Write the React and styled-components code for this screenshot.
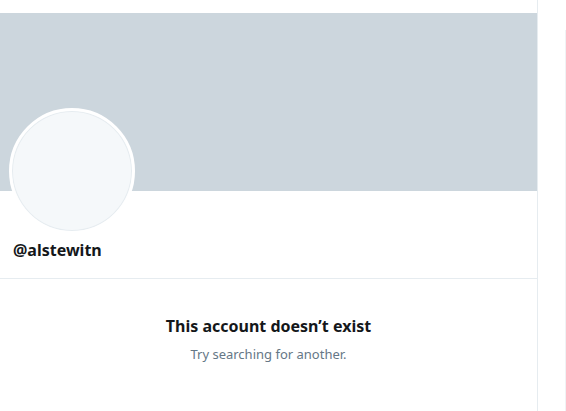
import React from "react"
import styled, { createGlobalStyle } from "styled-components"

const GlobalStyle = createGlobalStyle`
  body {
    margin: 0;
    background: #ffffff;
    font-family: "Noto Sans", "Open Sans", sans-serif;
  }
`

const Page = styled.div`
  display: flex;
  height: 411px;
  overflow: hidden;
`

const Main = styled.main`
  width: 537px;
  flex-shrink: 0;
  border-right: 1px solid #e6ecf0;
`

const Header = styled.div`
  height: 13px;
`

const Banner = styled.div`
  height: 178px;
  background: #ccd6dd;
`

const ProfileInfo = styled.div`
  display: flex;
  flex-direction: column;
  padding: 0 13px;
  border-bottom: 1px solid #e6ecf0;
  height: 87px;
`

const Avatar = styled.div`
  width: 120px;
  height: 120px;
  margin-top: -83px;
  margin-left: -4px;
  border-radius: 50%;
  border: 3px solid #ffffff;
  background: #f5f8fa;
  box-shadow: 0 0 0 1px #e6ecf0 inset;
`

const Handle = styled.div`
  margin-top: 6px;
  font-size: 16px;
  font-weight: 700;
  color: #14171a;
  line-height: 20px;
`

const EmptyState = styled.div`
  display: flex;
  flex-direction: column;
  align-items: center;
  padding-top: 36px;
`

const EmptyTitle = styled.div`
  font-size: 16px;
  font-weight: 700;
  color: #14171a;
  line-height: 22px;
`

const EmptyText = styled.div`
  margin-top: 8px;
  font-size: 13px;
  color: #657786;
  line-height: 18px;
`

const Sidebar = styled.aside`
  flex: 1;
  padding-top: 30px;
  padding-left: 27px;
`

const SidebarCard = styled.div`
  height: 100%;
  border-left: 1px solid #f0f3f5;
`

export default function App() {
  return (
    <>
      <GlobalStyle />
      <Page>
        <Main>
          <Header />
          <Banner />
          <ProfileInfo>
            <Avatar />
            <Handle>@alstewitn</Handle>
          </ProfileInfo>
          <EmptyState>
            <EmptyTitle>This account doesn’t exist</EmptyTitle>
            <EmptyText>Try searching for another.</EmptyText>
          </EmptyState>
        </Main>
        <Sidebar>
          <SidebarCard />
        </Sidebar>
      </Page>
    </>
  )
}
